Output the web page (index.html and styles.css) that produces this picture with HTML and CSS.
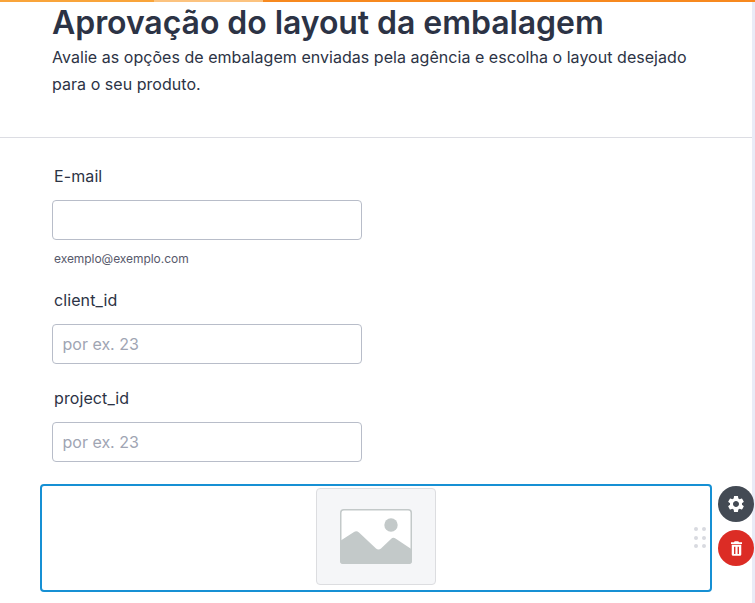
FILE: index.html
```html
<!DOCTYPE html>
<html lang="pt">
<head>
<meta charset="utf-8">
<title>Aprovação do layout da embalagem</title>
<link rel="stylesheet" href="styles.css">
</head>
<body>
<div class="topbar"><span class="seg-a"></span><span class="seg-b"></span><span class="seg-c"></span></div>
<main class="page">
  <header class="head">
    <h1>Aprovação do layout da embalagem</h1>
    <p>Avalie as opções de embalagem enviadas pela agência e escolha o layout desejado para o seu produto.</p>
  </header>
  <form class="fields">
    <div class="field">
      <label for="email">E-mail</label>
      <input id="email" type="text">
      <small>exemplo@exemplo.com</small>
    </div>
    <div class="field">
      <label for="client">client_id</label>
      <input id="client" type="text" placeholder="por ex. 23">
    </div>
    <div class="field">
      <label for="project">project_id</label>
      <input id="project" type="text" placeholder="por ex. 23">
    </div>
    <div class="image-row">
      <div class="image-box">
        <div class="placeholder">
          <svg viewBox="0 0 72 55" width="72" height="55" aria-hidden="true">
            <rect x="0.75" y="0.75" width="70.5" height="53.5" rx="3" fill="#fff" stroke="#c3c9c9" stroke-width="1.5"/>
            <path d="M0 32 L14 23 Q16.500 21.500 19 23.500 L36 39.500 Q38.500 41.500 41 39.500 L51 30 Q53 28 55.500 29.500 L72 40.500 V52 a3 3 0 0 1 -3 3 H3 a3 3 0 0 1 -3 -3 Z" fill="#c3c9c9"/>
            <circle cx="51" cy="16" r="6.700" fill="#c3c9c9"/>
          </svg>
        </div>
        <div class="grip"><i></i><i></i><i></i><i></i><i></i><i></i></div>
      </div>
      <div class="actions">
        <button type="button" class="act gear" aria-label="Configurações">
          <svg viewBox="0 0 24 24" width="20" height="20" aria-hidden="true"><path fill="#fff" d="M19.14 12.94c.04-.3.06-.61.06-.94 0-.32-.02-.64-.07-.94l2.03-1.58c.18-.14.23-.41.12-.61l-1.92-3.32c-.12-.22-.37-.29-.59-.22l-2.39.96c-.5-.38-1.03-.7-1.62-.94l-.36-2.54c-.04-.24-.24-.41-.48-.41h-3.84c-.24 0-.43.17-.47.41l-.36 2.54c-.59.24-1.13.57-1.62.94l-2.39-.96c-.22-.08-.47 0-.59.22L2.74 8.87c-.12.21-.08.47.12.61l2.03 1.58c-.05.3-.09.63-.09.94s.02.64.07.94l-2.03 1.58c-.18.14-.23.41-.12.61l1.92 3.32c.12.22.37.29.59.22l2.39-.96c.5.38 1.03.7 1.62.94l.36 2.54c.05.24.24.41.48.41h3.84c.24 0 .44-.17.47-.41l.36-2.54c.59-.24 1.13-.56 1.62-.94l2.39.96c.22.08.47 0 .59-.22l1.92-3.32c.12-.22.07-.47-.12-.61l-2.01-1.58zM12 15.600c-1.980 0-3.600-1.620-3.600-3.600s1.620-3.600 3.600-3.600 3.600 1.620 3.600 3.600-1.620 3.600-3.600 3.600z"/></svg>
        </button>
        <button type="button" class="act trash" aria-label="Excluir">
          <svg viewBox="0 0 12 16" width="11" height="15" aria-hidden="true"><path fill="#fff" fill-rule="evenodd" d="M4 0h4l.7 1.300H12V3H0V1.300h3.300zM.8 4h10.400v10.500a1.500 1.500 0 0 1-1.500 1.500H2.300a1.500 1.500 0 0 1-1.500-1.500zM3.300 6v8h1.500V6zM7.200 6v8h1.500V6z"/></svg>
        </button>
      </div>
    </div>
  </form>
</main>
</body>
</html>
```
FILE: styles.css
```css
* { box-sizing: border-box; }
html, body { margin: 0; height: 100%; overflow: hidden; }
body { background: #e9ebf7; font-family: Inter, "Liberation Sans", sans-serif; color: #2c3345; display: flex; flex-direction: column; }
.topbar { display: flex; height: 2px; flex: none; }
.seg-a { width: 154px; background: #f9a43a; }
.seg-b { width: 109px; background: #fcc37f; }
.seg-c { flex: 1; background: #f7891f; }
.page { flex: 1; width: 752px; background: #fff; }
.head { height: 136px; padding: 1px 52px 0; border-bottom: 1px solid #dcdde3; }
.head h1 { margin: 0; font-size: 32px; line-height: 40px; font-weight: 600; letter-spacing: -0.06px; }
.head p { margin: 1px 0 0; font-size: 16px; line-height: 26.500px; max-width: 650px; letter-spacing: 0.04px; }
.fields { padding: 26px 0 0 40px; }
.field { display: flex; flex-direction: column; align-items: flex-start; padding-left: 12px; margin-bottom: 22px; }
.field label { font-size: 16px; line-height: 24px; padding-left: 2px; margin-bottom: 12px; color: #2c3345; letter-spacing: 0.1px; }
.field input { width: 310px; height: 40px; border: 1px solid #b8bdc9; border-radius: 4px; padding: 0 9.500px; font: 16px Inter, "Liberation Sans", sans-serif; background: #fff; }
.field input::placeholder { color: #a0a5b3; opacity: 1; }
.field small { font-size: 12px; line-height: 14px; margin-top: 12px; padding-left: 2px; color: #57596b; letter-spacing: -0.05px; }
.image-row { display: flex; gap: 6px; align-items: flex-start; }
.image-box { position: relative; flex: none; width: 672px; height: 108px; border: 2px solid #1690d4; border-radius: 4px; display: flex; justify-content: center; align-items: flex-start; padding-top: 2px; }
.placeholder { width: 120px; height: 97px; background: #f5f6f8; border: 1.500px solid #dcdde0; border-radius: 4px; display: flex; align-items: center; justify-content: center; }
.grip { position: absolute; right: 4px; top: 41px; display: grid; grid-template-columns: 4px 4px; column-gap: 4px; row-gap: 4.500px; }
.grip i { width: 4px; height: 4px; border-radius: 50%; background: #d8dae0; }
.actions { display: flex; flex: none; flex-direction: column; gap: 8px; margin-top: 2px; }
.act { width: 36px; height: 36px; border: 0; border-radius: 50%; padding: 0; display: flex; align-items: center; justify-content: center; }
.gear { background: #434a54; }
.trash { background: #dc2c25; }
```
